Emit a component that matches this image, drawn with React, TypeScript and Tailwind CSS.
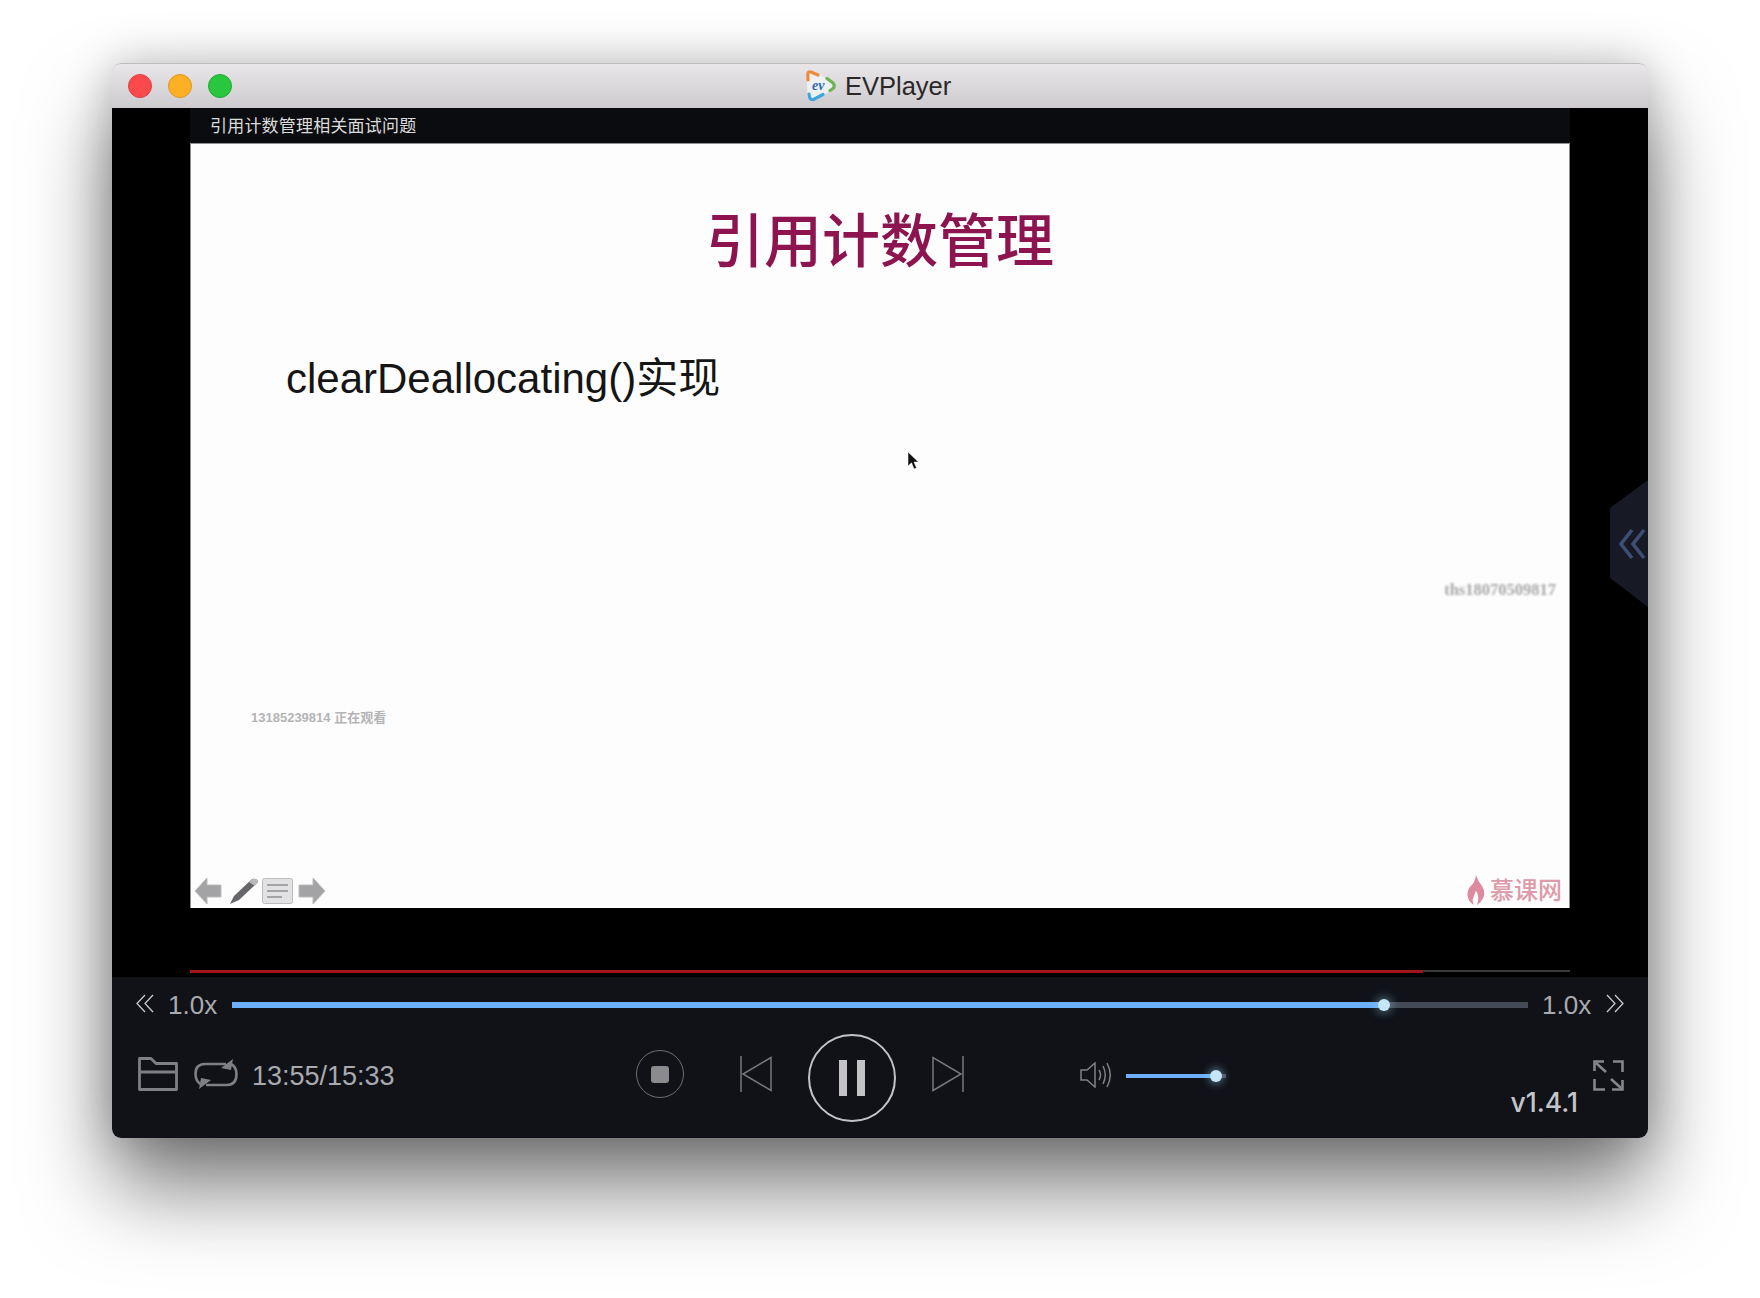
import React from 'react';

const cjk = "font-['Helvetica_Neue','Liberation_Sans','Noto_Sans_CJK_SC',sans-serif]";

const EvLogo = () => (
  <svg width="32" height="34" viewBox="0 0 32 34" fill="none" strokeWidth="3.2" strokeLinecap="round">
    <path d="M5 1.5 Q1.5 1 1.7 5 L2.5 28 Q3 33 8 32 L28 20.5 Q32 17 28 13.5 L9 2.5 Z" fill="#eef1f4" />
    <path d="M3 11 L2.8 5 Q3 2 6 3 L13 6" stroke="#ee8a3c" />
    <path d="M22 9.5 L28 14 Q30.5 17 28 19.5 L25 21.5" stroke="#6fb552" />
    <path d="M4 25 L4.5 28 Q5 31 8.5 30.5 L18 25.5" stroke="#3fa6dc" />
    <text x="7" y="21" fontSize="14" fontWeight="700" fontStyle="italic" fill="#2a6cae" stroke="none" fontFamily="Liberation Serif, serif">ev</text>
  </svg>
);

const Chevrons = ({ flip }: { flip?: boolean }) => (
  <svg width="18" height="19" viewBox="0 0 18 19" fill="none" stroke="#c9cace" strokeWidth="1.3" className={flip ? 'rotate-180' : ''}>
    <path d="M9 1 L1 9.5 L9 18" />
    <path d="M17 1 L9 9.5 L17 18" />
  </svg>
);

const FolderIcon = () => (
  <svg width="40" height="34" viewBox="0 0 40 34" fill="none" stroke="#7f8084" strokeWidth="2.8" strokeLinejoin="round" className="mt-[23px]">
    <path d="M1.5 32.5 V1.5 H13 L18 6.5 H38.5 V32.5 Z" />
    <path d="M1.5 15 H38.5" />
  </svg>
);

const LoopIcon = () => (
  <svg width="44" height="30" viewBox="0 0 44 30" fill="none" stroke="#7f8084" strokeWidth="2.6" className="mt-[25px] ml-[16px]">
    <path d="M8 26 Q1.5 23 1.5 15 Q1.5 5 11 5 H32" />
    <path d="M37 5 Q42.5 8 42.5 15 Q42.5 26 33 26 H12" />
    <path d="M27 9 L39 0 L37 11 Z" fill="#7f8084" stroke="none" />
    <path d="M17 21 L5 30 L7 19 Z" fill="#7f8084" stroke="none" />
  </svg>
);

const SkipIcon = ({ flip }: { flip?: boolean }) => (
  <svg width="32" height="36" viewBox="0 0 32 36" fill="none" stroke="#77787c" strokeWidth="1.5" className={flip ? 'rotate-180' : ''}>
    <path d="M1 0 V36" />
    <path d="M31 1.5 L3 18 L31 34.5 Z" />
  </svg>
);

const VolumeIcon = () => (
  <svg width="32" height="26" viewBox="0 0 32 26" fill="none" stroke="#808185" strokeWidth="1.5" className="mt-[28px]">
    <path d="M1 8 H7 L15 1 V25 L7 18 H1 Z" />
    <path d="M19 8 Q22 13 19 18" />
    <path d="M23 4 Q27.5 13 23 22" />
    <path d="M27 1 Q33.5 13 27 25" />
  </svg>
);

const FullscreenIcon = () => (
  <svg width="31" height="31" viewBox="0 0 31 31" fill="none" stroke="#85868a" strokeWidth="2.6">
    <path d="M11 1.5 H1.5 V11" />
    <path d="M20 1.5 H29.5 V12" />
    <path d="M1.5 19 V29.5 H12" />
    <path d="M29.5 20 V29.5 H19" />
    <path d="M3 3 L13 12" />
    <path d="M28 28 L18 19" />
  </svg>
);

const SlideTools = () => (
  <svg width="134" height="34" viewBox="0 0 134 34">
    <path d="M1 17 L13 4 V11 H27 V23 H13 V30 Z" fill="#a3a3a5" stroke="#bcbcbe" />
    <path d="M36 30 L40 22 L58 5 Q63 4 64 8 L45 26 Z" fill="#66666a" />
    <path d="M55 8 L58 5 Q63 4 64 8 L61 12 Z" fill="#b9b9bc" />
    <rect x="68.5" y="4.5" width="30" height="25" rx="2" fill="#e2e2e4" stroke="#bcbcbe" />
    <path d="M73 11 H94 M73 17 H94 M73 23 H88" stroke="#a3a3a5" strokeWidth="2" />
    <path d="M131 17 L119 4 V11 H105 V23 H119 V30 Z" fill="#a3a3a5" stroke="#bcbcbe" />
  </svg>
);

const Flame = () => (
  <svg width="18" height="30" viewBox="0 0 18 27" preserveAspectRatio="none">
    <path d="M9 0 Q11 6 15 10 Q19 16 16 21 Q14 25 10 27 Q13 20 9 14 Q7 19 6 21 Q5 24 7 27 Q1 24 0.5 18 Q0.5 12 5 9 Q8 6 9 0 Z" fill="#dd8a9e" />
  </svg>
);

const App: React.FC = () => {
  return (
    <div className={`w-[1760px] h-[1298px] overflow-hidden bg-white pt-[63px] pl-[112px] ${cjk}`}>
      <div className="w-[1536px] h-[1075px] rounded-[9px] shadow-[0_50px_85px_rgba(0,0,0,0.52),0_0_45px_rgba(0,0,0,0.22)] flex flex-col">
        {/* title bar */}
        <div className="h-[45px] rounded-t-[9px] bg-gradient-to-b from-[#e8e6e8] to-[#cdcbcd] border-t border-[#bdbdbd] flex items-center relative">
          <div className="flex gap-[16px] pl-[16px]">
            <div className="w-[24px] h-[24px] rounded-full bg-[#fc4a4c] border border-[#df3f41]" />
            <div className="w-[24px] h-[24px] rounded-full bg-[#fdb024] border border-[#de9520]" />
            <div className="w-[24px] h-[24px] rounded-full bg-[#28c73d] border border-[#1fab30]" />
          </div>
          <div className="ml-[573px] flex items-center gap-[8px]">
            <EvLogo />
            <span className="pt-[2px] text-[25.5px] leading-none text-[#2a2829]">EVPlayer</span>
          </div>
        </div>

        {/* video */}
        <div className="h-[869px] bg-black px-[78px] flex flex-col relative">
          <div className="h-[35px] bg-[#0b0c10] pl-[20px] pt-[1px] text-[17px] leading-[35px] tracking-[0.2px] text-[#dcdcdc]">引用计数管理相关面试问题</div>
          <div className="h-[765px] bg-[#fdfdfd] border-x border-t border-[#8f8f94] flex flex-col relative">
            <div className="pt-[62px] text-center text-[58px] leading-[72px] font-medium text-[#8e1450]">引用计数管理</div>
            <div className="mt-[75px] pl-[95px] text-[42px] leading-[52px] text-[#151515]">clearDeallocating()实现</div>
            <div className="mt-auto flex items-end justify-between pl-[3px] pr-[7px]">
              <SlideTools />
              <div className="flex items-center gap-[5px] pb-[3px]">
                <Flame />
                <span className="pt-[2px] text-[24px] leading-none font-medium text-[#dd9aa8]">慕课网</span>
              </div>
            </div>

            {/* watermarks, cursor */}
            <span className="absolute left-[60px] top-[565px] text-[13px] leading-[18px] font-bold text-[#b4b4b6]">13185239814 正在观看</span>
            <span className="absolute right-[13px] top-[436px] font-['Liberation_Serif',serif] text-[16.5px] leading-[20px] font-bold text-[#a8a8a8] blur-[0.8px]">ths18070509817</span>
            <svg width="12" height="18" viewBox="0 0 12 18" className="absolute left-[716px] top-[308px]">
              <path d="M1 0 V14 L4.5 10.8 L7 17 L9.5 16 L7 10 H11.5 Z" fill="#111" stroke="#fff" strokeWidth="0.5" />
            </svg>
          </div>

          <div className="mt-[62px] h-[3px] flex">
            <div className="w-[1233px] bg-[#a0151c]" />
            <div className="flex-1 h-[2px] bg-[#3a3a3c]" />
          </div>

          {/* side tab */}
          <svg width="38" height="127" viewBox="0 0 38 127" className="absolute right-0 top-[372px]">
            <path d="M38 0 L0 28 V98 L38 127 Z" fill="#171a24" />
            <path d="M22 50 L11 64 L22 78 M34 50 L23 64 L34 78" fill="none" stroke="#3f4e78" strokeWidth="3.5" />
          </svg>
        </div>

        {/* controls */}
        <div className="h-[161px] rounded-b-[9px] bg-[#101217] text-[#a9aab0] flex flex-col">
          <div className="h-[55px] flex items-center pl-[24px]">
            <div className="-mt-[3px]"><Chevrons /></div>
            <span className="ml-[14px] w-[50px] text-[26px] leading-none">1.0x</span>
            <div className="ml-[14px] w-[1296px] h-[6px] bg-[#454a57] relative">
              <div className="h-full w-[1152px] bg-[#6cb0fb]" />
              <div className="absolute left-[1146px] -top-[3px] w-[12px] h-[12px] rounded-full bg-[#c5e6f8] shadow-[0_0_8px_3px_rgba(160,215,245,0.35)]" />
            </div>
            <span className="ml-[14px] w-[50px] text-[26px] leading-none">1.0x</span>
            <div className="ml-[14px] -mt-[3px]"><Chevrons flip /></div>
          </div>

          <div className="mt-[2px] h-[88px] flex items-start pl-[26px]">
            <div className="w-[498px] flex items-start">
              <FolderIcon />
              <LoopIcon />
              <span className="ml-[14px] mt-[27px] text-[27px] leading-[30px]">13:55/15:33</span>
            </div>
            <div className="mt-[16px] w-[48px] h-[48px] rounded-full border-[1.5px] border-[#6d6e72] flex items-center justify-center">
              <div className="w-[18px] h-[17px] rounded-[3px] bg-[#8b8b8e]" />
            </div>
            <div className="ml-[56px] mt-[22px]"><SkipIcon /></div>
            <div className="ml-[36px] w-[88px] h-[88px] rounded-full border-[2.5px] border-[#c4c4c6] flex items-center justify-center gap-[10.5px]">
              <div className="w-[7.5px] h-[36px] bg-[#c4c4c6]" />
              <div className="w-[7.5px] h-[36px] bg-[#c4c4c6]" />
            </div>
            <div className="ml-[36px] mt-[22px]"><SkipIcon flip /></div>
            <div className="ml-[116px]"><VolumeIcon /></div>
            <div className="ml-[14px] mt-[40px] w-[100px] h-[4px] bg-[#454a57] relative">
              <div className="h-full w-[90px] bg-[#6cb0fb]" />
              <div className="absolute left-[84px] -top-[4px] w-[12px] h-[12px] rounded-full bg-[#c5e6f8] shadow-[0_0_7px_3px_rgba(160,215,245,0.35)]" />
            </div>
            <div className="ml-auto pr-[24px] flex items-start">
              <span className="mt-[54px] font-['Inter',sans-serif] text-[26.5px] leading-[28px] font-medium text-[#c4c5c9]">v1.4.1</span>
              <div className="ml-[15px] mt-[26px]"><FullscreenIcon /></div>
            </div>
          </div>
        </div>
      </div>
    </div>
  );
};

export default App;
